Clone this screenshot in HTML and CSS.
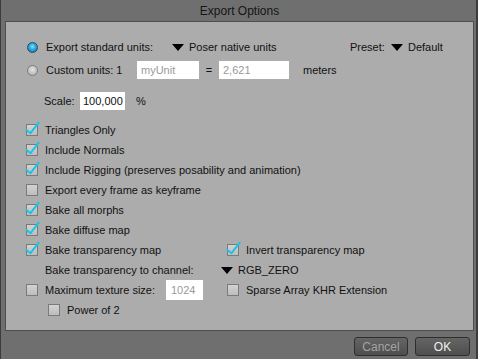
FILE: index.html
```html
<!DOCTYPE html>
<html>
<head>
  <title>Export Options</title>
  <link rel="stylesheet" href="styles.css">
</head>
<body>
<div class="window">
  <div class="titlebar">Export Options</div>
  <div class="panel">
    <div class="row first">
      <span class="radio on"></span>
      <span class="label w-units">Export standard units:</span>
      <span class="popup w-native"><span class="tri"></span>Poser native units</span>
      <span class="label w-preset">Preset:</span>
      <span class="popup"><span class="tri"></span>Default</span>
    </div>
    <div class="row">
      <span class="radio"></span>
      <span class="label w-custom">Custom units: 1</span>
      <span class="field w-unit dim">myUnit</span>
      <span class="eq">=</span>
      <span class="field w-meters dim">2,621</span>
      <span class="label">meters</span>
    </div>
    <div class="row scale">
      <span class="label w-scale">Scale:</span>
      <span class="field w-num">100,000</span>
      <span class="label">%</span>
    </div>

    <div class="checks">
      <div class="row"><span class="check on"></span>Triangles Only</div>
      <div class="row"><span class="check on"></span>Include Normals</div>
      <div class="row"><span class="check on"></span>Include Rigging (preserves posability and animation)</div>
      <div class="row"><span class="check"></span>Export every frame as keyframe</div>
      <div class="row"><span class="check on"></span>Bake all morphs</div>
      <div class="row"><span class="check on"></span>Bake diffuse map</div>
      <div class="row">
        <span class="col"><span class="check on"></span>Bake transparency map</span>
        <span class="col2"><span class="check on"></span>Invert transparency map</span>
      </div>
      <div class="row">
        <span class="col channel">Bake transparency to channel:</span>
        <span class="popup"><span class="tri"></span>RGB_ZERO</span>
      </div>
      <div class="row">
        <span class="col"><span class="check"></span><span class="w-max">Maximum texture size:</span><span class="field w-size dim">1024</span></span>
        <span class="col2"><span class="check"></span>Sparse Array KHR Extension</span>
      </div>
      <div class="row indent"><span class="check"></span>Power of 2</div>
    </div>
  </div>
  <div class="footer">
    <button class="btn cancel">Cancel</button>
    <button class="btn ok">OK</button>
  </div>
</div>
</body>
</html>
```

FILE: styles.css
```css
body {
    margin: 0;
    background: #6e6e6e;
    font-family: "Liberation Sans", Arial, sans-serif;
    font-size: 11px;
    color: #111;
}
.window {
    width: 478px;
    height: 359px;
    box-sizing: border-box;
    background: #6f6f6f;
    border-left: 1px solid #3c3c3c;
    border-right: 2px solid #3c3c3c;
    padding: 0 2px 0 4px;
}
.titlebar {
    height: 21px;
    line-height: 22px;
    text-align: center;
    font-size: 12px;
    color: #151515;
}
.panel {
    height: 310px;
    box-sizing: border-box;
    background: #acacac;
    border: 1px solid #4e4e4e;
    padding: 15px 0 0 20px;
}
.row {
    display: flex;
    align-items: center;
    height: 20px;
    white-space: nowrap;
}
.first {
    margin-bottom: 3px;
}
.scale {
    margin-top: 11px;
    padding-left: 18px;
}
.checks {
    margin-top: 9px;
}
.radio {
    width: 11px;
    height: 11px;
    border-radius: 50%;
    box-sizing: border-box;
    border: 1px solid #7c7c7c;
    background: radial-gradient(circle at 50% 40%, #e4e4e4, #a9a9a9);
    margin: 0 8px 0 1px;
}
.radio.on {
    border-color: #1d4f6e;
    background: radial-gradient(circle at 50% 40%, #7ee0ff 0, #2fa6dc 45%, #17618f 100%);
}
.label {
    display: inline-block;
}
.w-units { width: 126px; }
.w-native { width: 178px; }
.w-preset { width: 41px; }
.w-custom { width: 91px; }
.w-scale { width: 36px; }
.popup {
    display: inline-flex;
    align-items: center;
}
.tri {
    width: 0;
    height: 0;
    border-left: 6px solid transparent;
    border-right: 6px solid transparent;
    border-top: 7px solid #000;
    margin-right: 5px;
}
.field {
    display: inline-block;
    height: 18px;
    line-height: 18px;
    box-sizing: border-box;
    background: #fff;
    padding-left: 4px;
}
.dim {
    color: #9a9a9a;
}
.w-unit { width: 62px; }
.w-meters { width: 70px; margin-right: 14px; }
.w-num { width: 45px; margin-right: 11px; padding-left: 3px; }
.eq {
    width: 20px;
    text-align: center;
}
.check {
    position: relative;
    width: 12px;
    height: 12px;
    box-sizing: border-box;
    border: 1px solid #7a7a7a;
    background: linear-gradient(#d2d2d2, #bdbdbd);
    margin-right: 7px;
    flex: none;
}
.check.on::after {
    content: "";
    position: absolute;
    left: 2px;
    top: -6px;
    width: 5px;
    height: 13px;
    border-right: 2px solid #19c3e6;
    border-bottom: 2px solid #19c3e6;
    transform: rotate(38deg);
    filter: drop-shadow(0 0 0.6px #0b3f55);
}
.col {
    display: flex;
    align-items: center;
    width: 195px;
}
.col2 {
    display: flex;
    align-items: center;
    margin-left: 6px;
}
.channel {
    padding-left: 19px;
    box-sizing: border-box;
}
.w-max { width: 121px; }
.w-size {
    width: 37px;
    height: 20px;
    line-height: 20px;
    padding-left: 5px;
}
.indent {
    padding-left: 22px;
}
.footer {
    display: flex;
    justify-content: flex-end;
    gap: 7px;
    padding: 6px 4px 0 0;
}
.btn {
    height: 19px;
    border: 1px solid #2e2e2e;
    border-radius: 3px;
    background: linear-gradient(#656565, #4e4e4e);
    font-family: "Liberation Sans", Arial, sans-serif;
    font-size: 12px;
    padding: 0;
}
.cancel {
    width: 54px;
    color: #a4a4a4;
}
.ok {
    width: 55px;
    color: #f0f0f0;
}
```
